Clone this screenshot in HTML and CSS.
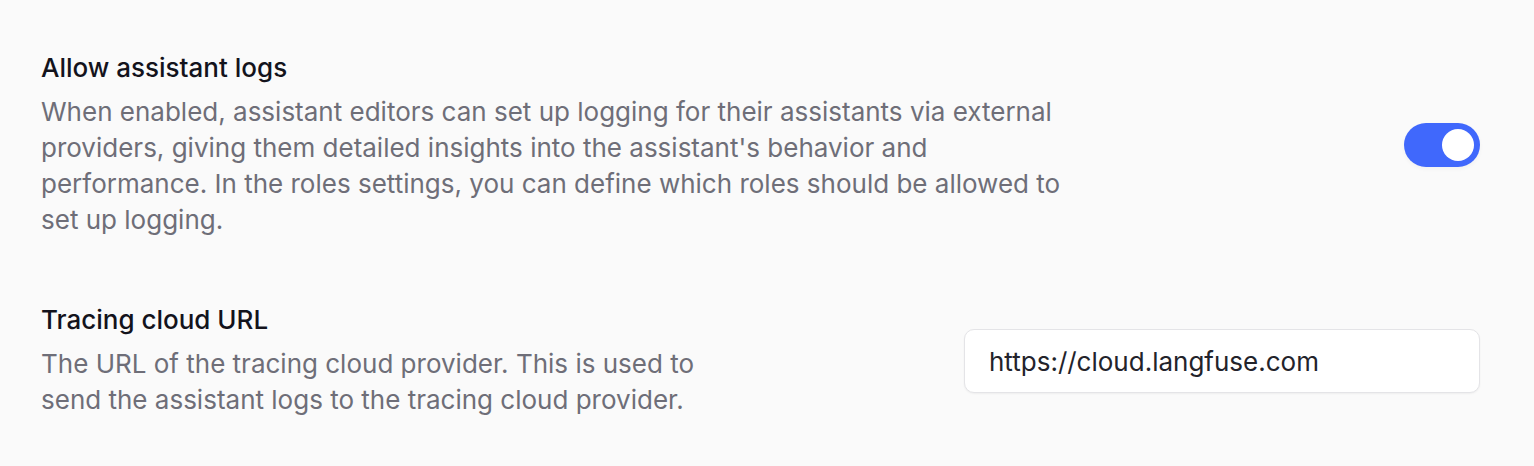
FILE: index.html
```html
<!DOCTYPE html>
<html lang="en">
<head>
<meta charset="utf-8">
<title>Settings</title>
<link rel="stylesheet" href="styles.css">
</head>
<body>
<div class="settings">
  <div class="row">
    <div class="info wide">
      <div class="title">Allow assistant logs</div>
      <div class="desc">When enabled, assistant editors can set up logging for their assistants via external providers, giving them detailed insights into the assistant's behavior and performance. In the roles settings, you can define which roles should be allowed to set up logging.</div>
    </div>
    <div class="toggle on"><span class="knob"></span></div>
  </div>
  <div class="row">
    <div class="info narrow">
      <div class="title">Tracing cloud URL</div>
      <div class="desc">The URL of the tracing cloud provider. This is used to send the assistant logs to the tracing cloud provider.</div>
    </div>
    <div class="input">https://cloud.langfuse.com</div>
  </div>
</div>
</body>
</html>
```
FILE: styles.css
```css
html, body {
  margin: 0;
  padding: 0;
  background: #fafafa;
}
body {
  font-family: Inter, "Noto Sans", sans-serif;
  -webkit-font-smoothing: antialiased;
}
.settings {
  padding: 52px 54px 40px 41px;
  display: flex;
  flex-direction: column;
  gap: 66px;
}
.row {
  display: flex;
  align-items: center;
  justify-content: space-between;
}
.info.wide { max-width: 1040px; }
.info.narrow { max-width: 662px; }
.title {
  font-size: 26px;
  line-height: 32px;
  font-weight: 500;
  color: #13131c;
  margin-bottom: 10px;
}
.desc {
  font-size: 26px;
  line-height: 36px;
  color: #6e6e78;
}
.toggle {
  width: 76px;
  height: 44px;
  border-radius: 22px;
  background: #4068fc;
  display: flex;
  align-items: center;
  justify-content: flex-end;
  padding: 0 6px;
  box-sizing: border-box;
  box-shadow: 0 2px 4px rgba(0,0,0,0.04);
}
.knob {
  width: 32px;
  height: 32px;
  border-radius: 50%;
  background: #fff;
}
.input {
  width: 516px;
  height: 64px;
  box-sizing: border-box;
  border: 1px solid #e4e4e7;
  border-radius: 10px;
  background: #fff;
  box-shadow: 0 1px 2px rgba(0,0,0,0.05);
  display: flex;
  align-items: center;
  padding: 0 24px;
  font-size: 26px;
  color: #23232b;
}
```
